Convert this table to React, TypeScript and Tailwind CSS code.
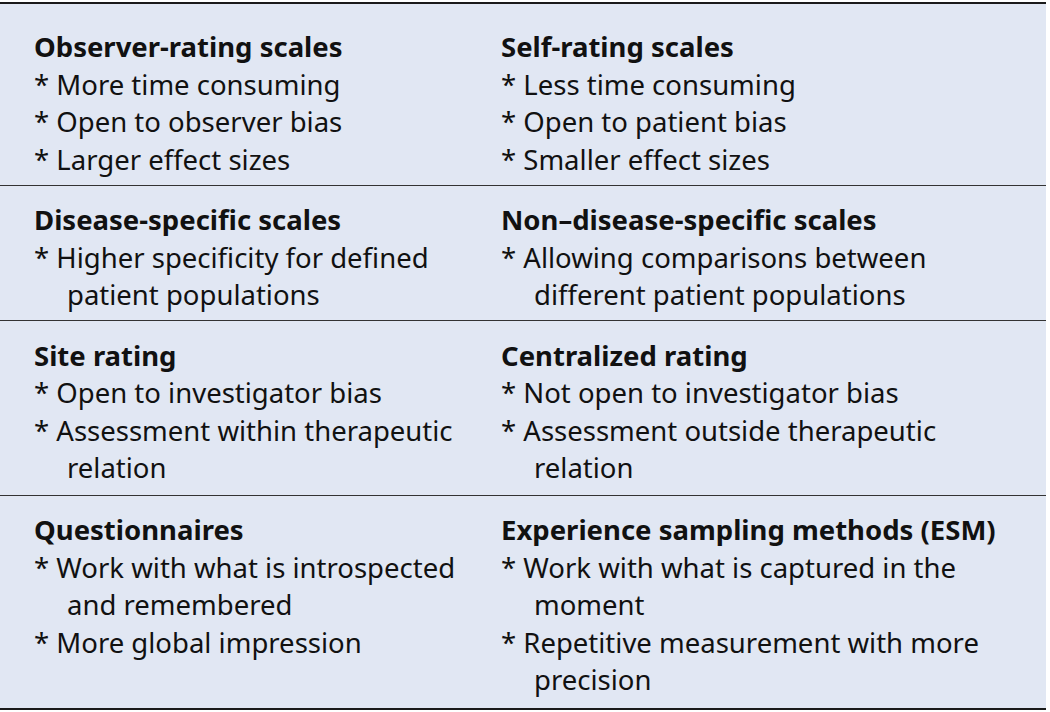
const rows = [
  {
    left: {
      title: "Observer-rating scales",
      items: ["More time consuming", "Open to observer bias", "Larger effect sizes"],
    },
    right: {
      title: "Self-rating scales",
      items: ["Less time consuming", "Open to patient bias", "Smaller effect sizes"],
    },
    pad: "pt-[24px] pb-[7px] border-b",
  },
  {
    left: {
      title: "Disease-specific scales",
      items: ["Higher specificity for defined patient populations"],
    },
    right: {
      title: "Non\u2013disease-specific scales",
      items: ["Allowing comparisons between different patient populations"],
    },
    pad: "pt-[15px] pb-[6.5px] border-b",
  },
  {
    left: {
      title: "Site rating",
      items: ["Open to investigator bias", "Assessment within therapeutic relation"],
    },
    right: {
      title: "Centralized rating",
      items: ["Not open to investigator bias", "Assessment outside therapeutic relation"],
    },
    pad: "pt-[15.5px] pb-[8px] border-b",
  },
  {
    left: {
      title: "Questionnaires",
      items: ["Work with what is introspected and remembered", "More global impression"],
    },
    right: {
      title: "Experience sampling methods (ESM)",
      items: ["Work with what is captured in the moment", "Repetitive measurement with more precision"],
    },
    pad: "pt-[15.5px] pb-[9px]",
  },
];

interface CellProps {
  title: string;
  items: string[];
}

const Cell = ({ title, items }: CellProps) => {
  return (
    <div className="pl-[34px] pr-2">
      <div className="font-bold">{title}</div>
      {items.map((item) => (
        <div key={item} className="pl-[33px] -indent-[33px]">
          * {item}
        </div>
      ))}
    </div>
  );
};

const App = () => {
  return (
    <div className="bg-white w-[1050px] h-[712px] pt-[2px]">
      <div
        className="w-[1046px] bg-[#e1e7f3] border-t-2 border-b-2 border-[#1a1a1a] text-[27.5px] leading-[37.5px] text-[#111]"
        style={{ fontFamily: '"Noto Sans", sans-serif' }}
      >
        {rows.map((row, i) => (
          <div key={i} className={`grid grid-cols-[467px_1fr] border-[#333] ${row.pad}`}>
            <Cell {...row.left} />
            <Cell {...row.right} />
          </div>
        ))}
      </div>
    </div>
  );
};

export default App;
